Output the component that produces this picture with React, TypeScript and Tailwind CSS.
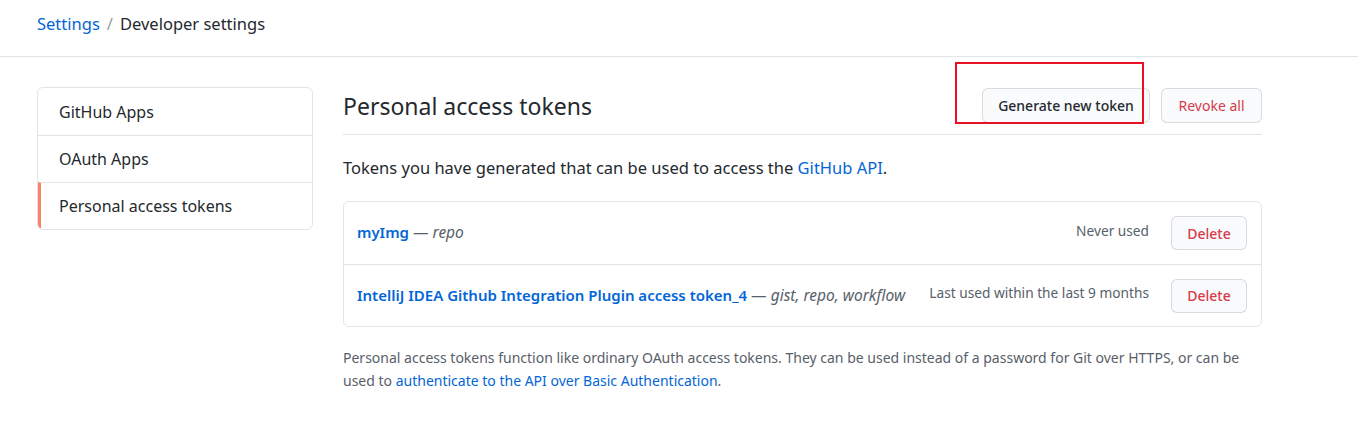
import React from 'react';

const tokens = [
  { name: 'myImg', scopes: 'repo', used: 'Never used' },
  { name: 'IntelliJ IDEA Github Integration Plugin access token_4', scopes: 'gist, repo, workflow', used: 'Last used within the last 9 months' },
];

const navItems = ['GitHub Apps', 'OAuth Apps', 'Personal access tokens'];

export default function App() {
  return (
    <div className="min-h-[441px] bg-white text-[#24292e] font-['Noto_Sans',Arial,sans-serif]">
      {/* header */}
      <div className="h-[57px] border-b border-[#e1e4e8] px-[37px] flex items-center">
        <div className="text-[16.5px] leading-none -mt-[7px]">
          <a className="text-[#0366d6]">Settings</a>
          <span className="text-[#959da5] mx-[7px]">/</span>
          <span>Developer settings</span>
        </div>
      </div>

      <div className="flex gap-[30px] px-[37px] pt-[30px]">
        {/* sidebar */}
        <nav className="w-[276px] shrink-0 self-start border border-[#e1e4e8] rounded-[6px] overflow-hidden">
          {navItems.map((item, i) => (
            <div
              key={item}
              className={`h-[47px] flex items-center text-[16px] ${i > 0 ? 'border-t border-[#e1e4e8]' : ''} ${i === 2 ? 'border-l-[3px] border-l-[#f9826c] pl-[18px]' : 'pl-[21px]'}`}
            >
              {item}
            </div>
          ))}
        </nav>

        {/* main */}
        <main className="w-[919px]">
          <div className="relative flex items-center justify-between border-b border-[#e1e4e8] pb-[10px] pt-[1px]">
            <h2 className="text-[23px] font-normal leading-[36px]">Personal access tokens</h2>
            <div className="flex gap-[11px] -mt-[1px]">
              <button className="h-[35px] w-[168px] text-[14px] font-medium border border-[#1b1f2326] rounded-[6px] bg-[#fafbfc]">
                Generate new token
              </button>
              <button className="h-[35px] w-[101px] text-[14px] text-[#d73a49] border border-[#1b1f2326] rounded-[6px] bg-[#fafbfc]">
                Revoke all
              </button>
            </div>
            {/* annotation box */}
            <div className="absolute left-[612px] top-[-25px] w-[189px] h-[62px] border-2 border-[#e81123] pointer-events-none" />
          </div>

          <p className="text-[16.5px] mt-[21px] mb-[21px] leading-[24px]">
            Tokens you have generated that can be used to access the <a className="text-[#0366d6]">GitHub API</a>.
          </p>

          <div className="border border-[#e1e4e8] rounded-[6px]">
            {tokens.map((t, i) => (
              <div
                key={t.name}
                className={`h-[62px] flex items-center justify-between pl-[13px] pr-[14px] text-[14px] ${i > 0 ? 'border-t border-[#e1e4e8]' : ''}`}
              >
                <div>
                  <a className="text-[#0366d6] font-semibold text-[15px]">{t.name}</a>
                  <span className="text-[#586069] text-[15.5px]"> — <em>{t.scopes}</em></span>
                </div>
                <div className="flex items-center gap-[22px]">
                  <span className="text-[#586069] -mt-[4px] text-[13.7px]">{t.used}</span>
                  <button className="h-[34px] w-[76px] text-[14px] font-medium text-[#d73a49] border border-[#1b1f2326] rounded-[6px] bg-[#fafbfc]">
                    Delete
                  </button>
                </div>
              </div>
            ))}
          </div>

          <p className="text-[14px] text-[#586069] leading-[23px] mt-[19px]">
            Personal access tokens function like ordinary OAuth access tokens. They can be used instead of a password for Git over HTTPS, or can be
            used to <a className="text-[#0366d6]">authenticate to the API over Basic Authentication</a>.
          </p>
        </main>
      </div>
    </div>
  );
}
